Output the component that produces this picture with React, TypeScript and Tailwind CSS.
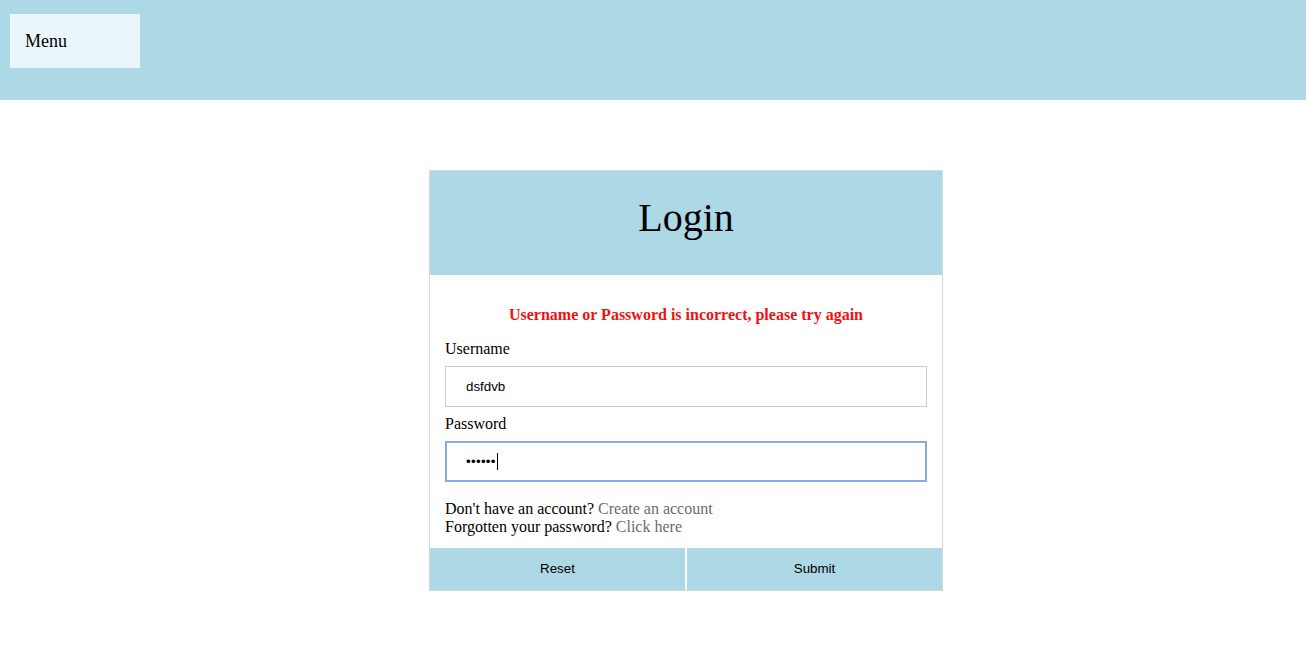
import React from "react";

export default function App() {
  return (
    <div className="min-h-[657px] bg-white" style={{ fontFamily: '"Liberation Serif", "Times New Roman", serif' }}>
      <header className="h-[100px] bg-[#add8e6] pt-[14px] pl-[10px]">
        <div className="w-[130px] h-[54px] bg-[#eaf6f9] flex items-center pl-[15px] text-[18px] text-black">
          Menu
        </div>
      </header>
      <div className="flex justify-center pt-[70px]">
        <div className="ml-[66px] w-[514px] border border-[#d8d8d8] bg-white">
          <div className="h-[104px] bg-[#add8e6] flex items-center justify-center">
            <h1 className="text-[40px] leading-none text-black mt-[-10px]">Login</h1>
          </div>
          <div className="px-[15px] pt-[31px]">
            <p className="text-center text-[16px] leading-[18px] font-bold text-[#ee1111]">
              Username or Password is incorrect, please try again
            </p>
            <label className="block mt-[16px] text-[16px] leading-[18px] text-black">Username</label>
            <input
              readOnly
              value="dsfdvb"
              className="block mt-[8px] w-[482px] h-[41px] border border-[#cccccc] bg-white px-[20px] text-[13.33px] text-black outline-none"
              style={{ fontFamily: '"Liberation Sans", Arial, sans-serif' }}
            />
            <label className="block mt-[8px] text-[16px] leading-[18px] text-black">Password</label>
            <div className="mt-[8px] w-[482px] h-[41px] border-2 border-[#85abea] bg-white px-[19px] flex items-center">
              <span
                className="text-[13.33px] text-black tracking-[0.3px]"
                style={{ fontFamily: '"Liberation Sans", Arial, sans-serif' }}
              >
                ••••••
              </span>
              <span className="inline-block w-px h-[17px] bg-black ml-[1px]" />
            </div>
            <div className="mt-[18px] text-[16px] leading-[18px] text-black">
              <div>
                Don't have an account? <a className="text-[#6b6b6b]">Create an account</a>
              </div>
              <div>
                Forgotten your password? <a className="text-[#6b6b6b]">Click here</a>
              </div>
            </div>
          </div>
          <div
            className="mt-[12px] flex gap-[2px] text-[13.33px] text-black"
            style={{ fontFamily: '"Liberation Sans", Arial, sans-serif' }}
          >
            <button className="flex-1 h-[42px] bg-[#add8e6]">Reset</button>
            <button className="flex-1 h-[42px] bg-[#add8e6]">Submit</button>
          </div>
        </div>
      </div>
    </div>
  );
}
